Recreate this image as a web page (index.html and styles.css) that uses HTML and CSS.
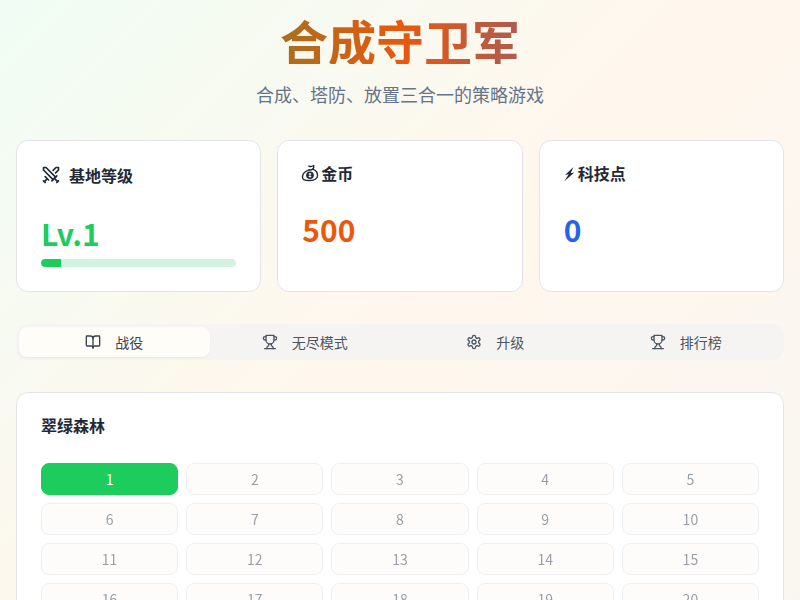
FILE: index.html
```html
<!DOCTYPE html>
<html lang="zh-CN">
<head>
<meta charset="utf-8">
<title>合成守卫军</title>
<link rel="stylesheet" href="styles.css">
</head>
<body>
<main class="page">
  <header class="hero">
    <h1 class="title">合成守卫军</h1>
    <p class="subtitle">合成、塔防、放置三合一的策略游戏</p>
  </header>
  <section class="stats">
    <div class="card stat">
      <div class="stat-head">
        <svg class="icon" viewBox="0 0 24 24"><polyline points="14.5 17.5 3 6 3 3 6 3 17.5 14.5"/><line x1="13" y1="19" x2="19" y2="13"/><line x1="16" y1="16" x2="20" y2="20"/><line x1="19" y1="21" x2="21" y2="19"/><polyline points="14.5 6.5 18 3 21 3 21 6 17.5 9.5"/><line x1="5" y1="14" x2="9" y2="18"/><line x1="7" y1="17" x2="4" y2="20"/><line x1="3" y1="19" x2="5" y2="21"/></svg>
        <span>基地等级</span>
      </div>
      <div class="value green">Lv.1</div>
      <div class="progress"><div class="progress-fill" style="width:10%"></div></div>
    </div>
    <div class="card stat">
      <div class="stat-head tight">
        <svg class="glyph" viewBox="0 0 16 16"><path class="glyph-line" d="M7 1.800c1.400.7 2.800.5 4.300-.5.300 1.300 0 2.400-.8 3.300"/><path class="glyph-line" d="M7.200 5.300c1.100.2 2.200 0 3.300-.7"/><path class="glyph-line" d="M7.200 5.300C4 6.500 1.200 9.100 1.300 11.700c.1 2.300 2.500 3 5.500 3 3.800 0 7.700-1.200 7.900-4.300.1-2.500-1.700-4.800-4.200-5.800"/><circle class="glyph-dot" cx="8" cy="10" r="3.400"/><path class="glyph-cut" d="M8 8v4M6.900 9.200c.3-.6 1.900-.6 2.200 0M6.900 10.800c.3.600 1.900.6 2.200 0"/></svg>
        <span>金币</span>
      </div>
      <div class="value orange">500</div>
    </div>
    <div class="card stat">
      <div class="stat-head tight">
        <svg class="glyph bolt" viewBox="0 0 11 16"><path class="glyph-dot" d="M8.800 2.400 1.800 9.300l3-.6L1.200 14.600 9.600 7.200l-3.100.6z"/></svg>
        <span>科技点</span>
      </div>
      <div class="value blue">0</div>
    </div>
  </section>
  <nav class="tabs">
    <button class="tab active"><svg class="icon" viewBox="0 0 24 24"><path d="M12 7v14"/><path d="M3 18a1 1 0 0 1-1-1V4a1 1 0 0 1 1-1h5a4 4 0 0 1 4 4 4 4 0 0 1 4-4h5a1 1 0 0 1 1 1v13a1 1 0 0 1-1 1h-6a3 3 0 0 0-3 3 3 3 0 0 0-3-3z"/></svg><span>战役</span></button>
    <button class="tab"><svg class="icon" viewBox="0 0 24 24"><path d="M6 9H4.500a2.500 2.500 0 0 1 0-5H6"/><path d="M18 9h1.500a2.500 2.500 0 0 0 0-5H18"/><path d="M4 22h16"/><path d="M10 14.660V17c0 .55-.47.98-.97 1.210C7.850 18.750 7 20.240 7 22"/><path d="M14 14.660V17c0 .55.47.98.97 1.210C16.150 18.750 17 20.240 17 22"/><path d="M18 2H6v7a6 6 0 0 0 12 0V2Z"/></svg><span>无尽模式</span></button>
    <button class="tab"><svg class="icon" viewBox="0 0 24 24"><path d="M12.220 2h-.44a2 2 0 0 0-2 2v.18a2 2 0 0 1-1 1.730l-.43.25a2 2 0 0 1-2 0l-.15-.08a2 2 0 0 0-2.730.73l-.22.38a2 2 0 0 0 .73 2.730l.15.1a2 2 0 0 1 1 1.720v.51a2 2 0 0 1-1 1.740l-.15.09a2 2 0 0 0-.73 2.730l.22.38a2 2 0 0 0 2.730.73l.15-.08a2 2 0 0 1 2 0l.43.25a2 2 0 0 1 1 1.730V20a2 2 0 0 0 2 2h.44a2 2 0 0 0 2-2v-.18a2 2 0 0 1 1-1.730l.43-.25a2 2 0 0 1 2 0l.15.08a2 2 0 0 0 2.730-.73l.22-.39a2 2 0 0 0-.73-2.730l-.15-.08a2 2 0 0 1-1-1.740v-.5a2 2 0 0 1 1-1.740l.15-.09a2 2 0 0 0 .73-2.730l-.22-.38a2 2 0 0 0-2.730-.73l-.15.08a2 2 0 0 1-2 0l-.43-.25a2 2 0 0 1-1-1.730V4a2 2 0 0 0-2-2z"/><circle cx="12" cy="12" r="3"/></svg><span>升级</span></button>
    <button class="tab"><svg class="icon" viewBox="0 0 24 24"><path d="M6 9H4.500a2.500 2.500 0 0 1 0-5H6"/><path d="M18 9h1.500a2.500 2.500 0 0 0 0-5H18"/><path d="M4 22h16"/><path d="M10 14.660V17c0 .55-.47.98-.97 1.210C7.850 18.750 7 20.240 7 22"/><path d="M14 14.660V17c0 .55.47.98.97 1.210C16.150 18.750 17 20.240 17 22"/><path d="M18 2H6v7a6 6 0 0 0 12 0V2Z"/></svg><span>排行榜</span></button>
  </nav>
  <section class="card campaign">
    <h2 class="campaign-title">翠绿森林</h2>
    <div class="levels">
      <button class="level current">1</button>
      <button class="level locked">2</button>
      <button class="level locked">3</button>
      <button class="level locked">4</button>
      <button class="level locked">5</button>
      <button class="level locked">6</button>
      <button class="level locked">7</button>
      <button class="level locked">8</button>
      <button class="level locked">9</button>
      <button class="level locked">10</button>
      <button class="level locked">11</button>
      <button class="level locked">12</button>
      <button class="level locked">13</button>
      <button class="level locked">14</button>
      <button class="level locked">15</button>
      <button class="level locked">16</button>
      <button class="level locked">17</button>
      <button class="level locked">18</button>
      <button class="level locked">19</button>
      <button class="level locked">20</button>
    </div>
  </section>
</main>
</body>
</html>
```
FILE: styles.css
```css
* { box-sizing: border-box; }
html, body { margin: 0; height: 100%; }
body {
  font-family: "Noto Sans CJK SC", "Noto Sans", sans-serif;
  color: #1f2937;
  background: linear-gradient(135deg, #f0fdf4 0%, #fff7ed 50%, #f9f6f1 100%);
  overflow: hidden;
}
.page { padding: 16px; display: flex; flex-direction: column; gap: 32px; }
.hero { text-align: center; }
.title {
  margin: 0 0 16px;
  font-size: 48px;
  line-height: 1;
  font-weight: 700;
  background: linear-gradient(90deg, #16a34a, #ea580c, #2563eb);
  -webkit-background-clip: text;
  background-clip: text;
  color: transparent;
}
.subtitle { margin: 0; font-size: 18px; line-height: 28px; color: #64748b; }
.stats { display: grid; grid-template-columns: repeat(3, 1fr); gap: 16px; }
.card { background: #fff; border: 1px solid #e2e4ea; border-radius: 12px; }
.stat { padding: 24px; }
.stat-head { display: flex; align-items: center; gap: 8px; height: 20px; font-size: 16px; font-weight: 600; line-height: 20px; }
.stat-head.tight { gap: 3px; height: 16px; line-height: 16px; }
.stat-head .icon { width: 20px; height: 20px; }
.icon { width: 16px; height: 16px; fill: none; stroke: currentColor; stroke-width: 2; stroke-linecap: round; stroke-linejoin: round; flex: none; }
.glyph { width: 18px; height: 18px; margin: 0 -1px; flex: none; }
.glyph.bolt { width: 13px; height: 19px; margin: 0 -1px; }
.glyph-line { fill: none; stroke: currentColor; stroke-width: 1.2; stroke-linecap: round; stroke-linejoin: round; }
.glyph-dot { fill: currentColor; }
.glyph-cut { fill: none; stroke: #fff; stroke-width: .9; }
.value { font-size: 30px; line-height: 36px; font-weight: 700; margin-top: 30px; }
.green { color: #1ccd5e; }
.orange { color: #ea580c; }
.blue { color: #2563eb; }
.progress { height: 8px; margin-top: 8px; border-radius: 4px; background: #d1f3df; overflow: hidden; }
.progress-fill { height: 100%; background: #1ccd5e; border-radius: 4px 0 0 4px; }
.tabs { display: grid; grid-template-columns: repeat(4, 1fr); height: 36px; padding: 3px; border-radius: 12px; background: #f5f4f2; }
.tab { display: flex; align-items: center; justify-content: center; gap: 14px; border: 0; border-radius: 8px; background: transparent; font: inherit; font-size: 14px; color: #4b5563; }
.tab.active { background: #fffdf8; box-shadow: 0 1px 2px rgba(0,0,0,.05); color: #374151; }
.campaign { padding: 24px; }
.campaign-title { margin: 0 0 30px; font-size: 16px; line-height: 16px; font-weight: 600; }
.levels { display: grid; grid-template-columns: repeat(5, 1fr); gap: 8px; }
.level { height: 32px; border: 1px solid #dcdee3; border-radius: 8px; background: #fdfbf6; font: inherit; font-size: 14px; color: #374151; }
.level.locked { opacity: .5; }
.level.current { background: #1ccd5e; border-color: #1ccd5e; color: #fff; }
```
